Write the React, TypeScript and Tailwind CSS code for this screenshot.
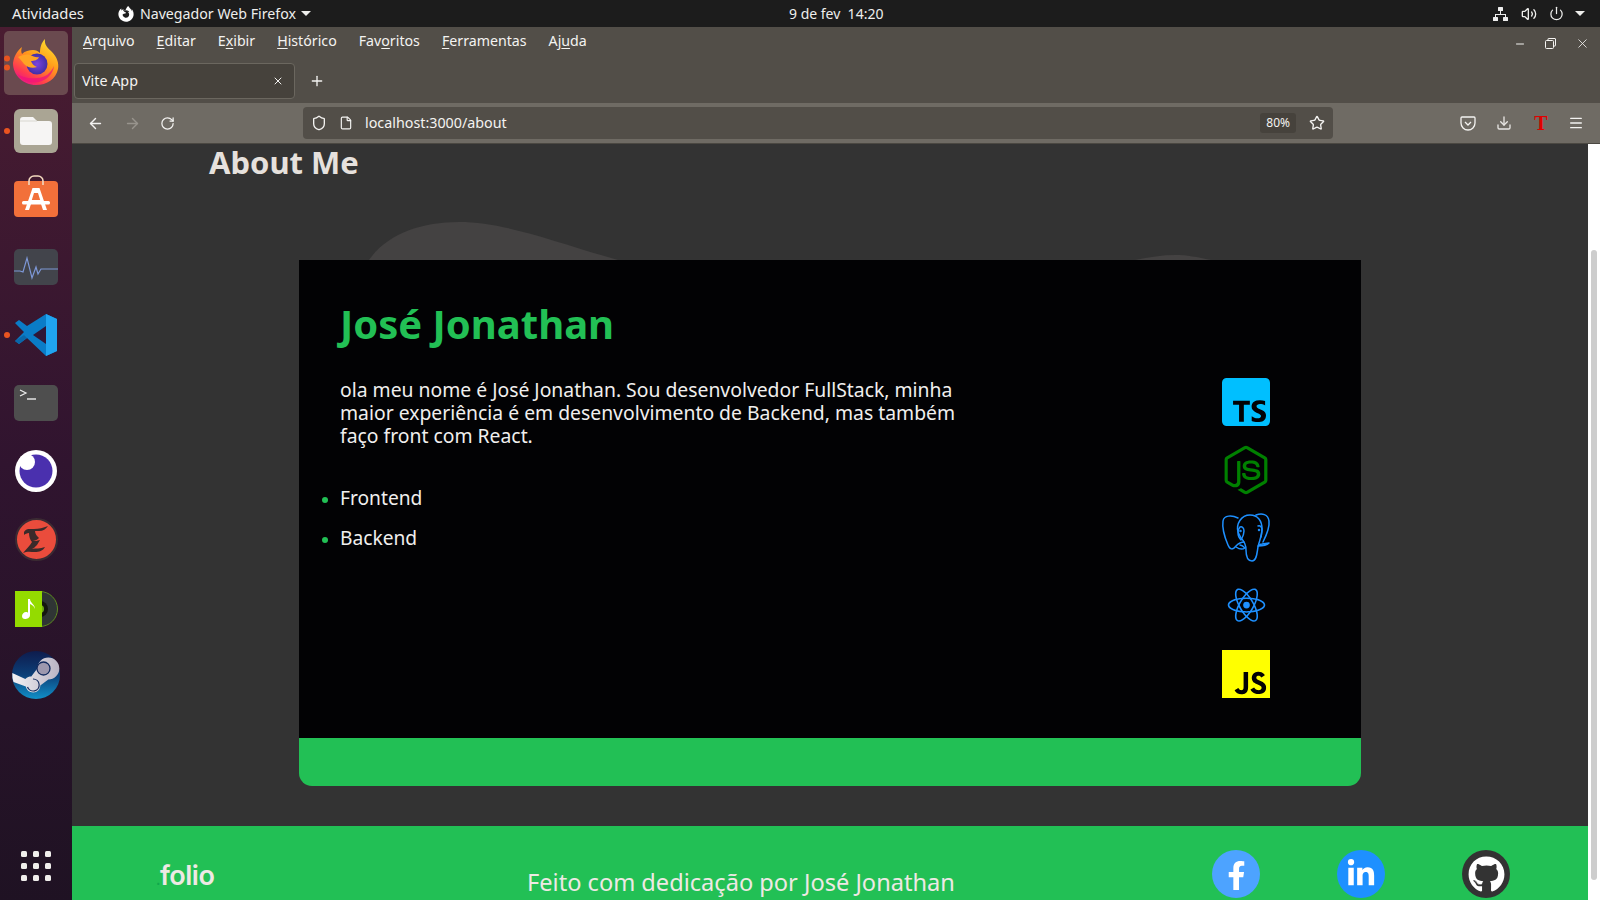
import React from "react";
import { BiLogoTypescript, BiLogoNodejs, BiLogoReact, BiLogoJavascript } from "react-icons/bi";
import { FaFacebookF, FaLinkedinIn, FaGithub, FaFirefoxBrowser } from "react-icons/fa";
import { ArrowLeft, ArrowRight, RotateCw, Shield, File, Star, Download, Menu, X, Plus, Minus, Volume2, Power } from "lucide-react";

const ui = { fontFamily: '"Noto Sans", "Open Sans", sans-serif' };

function Firefox() {
  return (
    <svg className="-mt-[3px] block" width="48" height="48" viewBox="0 0 48 48">
      <defs>
        <linearGradient id="ff1" x1="0.85" y1="0" x2="0.25" y2="1">
          <stop offset="0" stopColor="#ffe430" />
          <stop offset="0.45" stopColor="#ff9a1a" />
          <stop offset="0.8" stopColor="#ff3a50" />
          <stop offset="1" stopColor="#e5148c" />
        </linearGradient>
        <radialGradient id="ff2" cx="0.5" cy="0.5" r="0.55">
          <stop offset="0" stopColor="#7b44e0" />
          <stop offset="1" stopColor="#3d2ca0" />
        </radialGradient>
      </defs>
      <path d="M33 1c-1 6 3 9 7 13 5 5 7 11 6 17-2 10-11 16-22 16C11 47 1 37 1 25 2 18 5 13 10 9c-1 3-1 5 0 7 3-3 7-4 11-4 3 0 5 1 7 3 0-5 1-10 5-14z" fill="url(#ff1)" />
      <circle cx="25" cy="26" r="10.500" fill="url(#ff2)" />
      <path d="M6 19c4-2 8-3 12-2 3 1 6 3 9 2-1 3-5 4-8 4 1 3 3 5 6 6-5 2-10 0-13-3-2-3-4-5-6-7z" fill="#ffa424" />
      <path d="M5 36c5 7 14 10 22 8 8-2 14-8 15-16-3 7-9 12-17 12-8 1-15-1-20-4z" fill="#f0127c" opacity="0.75" />
    </svg>
  );
}

function Files() {
  return (
    <div className="w-11 h-11 rounded-[6px] bg-[#aaa594] flex items-center justify-center">
      <svg width="32" height="28" viewBox="0 0 32 28">
        <path d="M3 0h10l4 4h12a3 3 0 0 1 3 3v18a3 3 0 0 1-3 3H3a3 3 0 0 1-3-3V3a3 3 0 0 1 3-3z" fill="#f6f5f4" />
        <path d="M0 4.500h17v-1H0z" fill="#d8d6d0" />
      </svg>
    </div>
  );
}

function Store() {
  return (
    <div className="relative w-11 -mt-[1px]">
      <svg className="absolute -top-[6px] left-[14px]" width="16" height="10" viewBox="0 0 16 10">
        <path d="M1 10V6a5 5 0 0 1 5-5h4a5 5 0 0 1 5 5v4" fill="none" stroke="#f3d9bf" strokeWidth="1.600" />
      </svg>
      <div className="w-11 h-[36px] rounded-[4px] bg-[#f2703a] flex items-center justify-center">
        <svg width="30" height="30" viewBox="0 0 30 30">
          <path d="M11.500 4h7l7.500 22h-4l-2-6H10l-2 6H4z M13 9l-2.200 7h8.400l-2.200-7z" fill="#fff" fillRule="evenodd" />
          <rect x="1" y="17" width="28" height="3.500" rx="1.500" fill="#fff" />
        </svg>
      </div>
    </div>
  );
}

function Monitor() {
  return (
    <div className="w-11 h-9 rounded-[5px] bg-[#42444b] overflow-hidden">
      <svg width="44" height="36" viewBox="0 0 44 36">
        <path d="M0 22h6l3 1 4-14 5 20 4-11 2 7 3-5h17" fill="none" stroke="#7d97d6" strokeWidth="1.200" />
      </svg>
    </div>
  );
}

function VSCode() {
  return (
    <svg width="44" height="44" viewBox="0 0 44 44">
      <path d="M32 1l11 5v32l-11 5-19-18-8 6-4-3 9-9-9-9 4-3 8 6z" fill="#0a7cc7" />
      <path d="M32 1l11 5v32l-11 5z" fill="#20a4f0" />
      <path d="M32 13L19 22l13 9z" fill="#2f1638" />
      <path d="M1 28l4 3 8-6-3-3z" fill="#0a66a8" />
    </svg>
  );
}

function Terminal() {
  return (
    <div className="w-11 h-9 rounded-[5px] bg-[#4e4e4e] relative">
      <svg className="absolute top-[4px] left-[5px]" width="18" height="12" viewBox="0 0 18 12">
        <path d="M1 1l6 3-6 3" fill="none" stroke="#eee" strokeWidth="1.200" />
        <path d="M8 10h9" stroke="#eee" strokeWidth="1.400" />
      </svg>
    </div>
  );
}

function Eye() {
  return (
    <svg width="42" height="42" viewBox="0 0 42 42">
      <circle cx="21" cy="21" r="21" fill="#fff" />
      <circle cx="21" cy="21" r="16.500" fill="#4a30ae" />
      <circle cx="12" cy="12" r="8" fill="#fff" />
    </svg>
  );
}

function Typora() {
  return (
    <div className="w-[43px] h-[43px] rounded-full bg-[#ea4c3c] border-2 border-[#3b2b33] flex items-center justify-center">
      <svg width="30" height="32" viewBox="0 0 30 32">
        <path d="M3 9c2-4 6-3 10-3 5 0 9-1 14-3-2 3-5 5-9 5l-4 0c0 3 2 5 4 7-2 2-4 3-7 3 3 0 5 0 8-1l-3 5c-2 2-3 3-5 4 4-1 8 0 13-2-2 4-6 5-10 5-4 0-8-1-12 1 3-4 7-7 9-11-2-2-3-6-3-9-2 0-4 1-5 2z" fill="#3a2a2a" />
      </svg>
    </div>
  );
}

function Music() {
  return (
    <div className="relative w-[44px] h-[36px] mt-[4px]">
      <div className="absolute right-0 top-0 w-[36px] h-[36px] rounded-full bg-[#2f3534] border border-[#5d8a20] flex items-center justify-center">
        <div className="w-4 h-4 rounded-full bg-[#15180f] flex items-center justify-center">
          <div className="w-2 h-2 rounded-full bg-[#6fae10]" />
        </div>
      </div>
      <div className="absolute left-[1px] top-0 w-[27px] h-[36px] bg-[#94db00] flex items-center justify-center">
        <svg width="16" height="22" viewBox="0 0 16 22">
          <path d="M7 1h2c0 4 5 5 5 10-1-3-3-4-5-5v11c0 3-3 4-5 4s-3-1-3-3 2-4 4-4c1 0 2 0 2 1z" fill="#fff" />
        </svg>
      </div>
    </div>
  );
}

function Steam() {
  return (
    <svg width="48" height="48" viewBox="0 0 48 48">
      <defs>
        <linearGradient id="st1" x1="0" y1="0" x2="0" y2="1">
          <stop offset="0" stopColor="#0e1c4d" />
          <stop offset="0.5" stopColor="#0c3f78" />
          <stop offset="1" stopColor="#1190c8" />
        </linearGradient>
        <linearGradient id="st2" x1="0" y1="0" x2="1" y2="0">
          <stop offset="0" stopColor="#f4f2f4" />
          <stop offset="1" stopColor="#b9b4c4" />
        </linearGradient>
      </defs>
      <circle cx="24" cy="24" r="24" fill="url(#st1)" />
      <path d="M0.300 22l13 6c2-2 4-2.500 6-2.500l6-8a11 11 0 1 1 11 11l-8 6c0 4-3 7-7 7s-7-3-7.500-6L1.500 31A24 24 0 0 1 0.300 22z" fill="url(#st2)" />
      <circle cx="31.500" cy="17.500" r="6.500" fill="#9d98ae" stroke="#122a5e" strokeWidth="1.300" />
      <path d="M21 28a6 6 0 1 1-5.500 8" fill="none" stroke="#122a5e" strokeWidth="1.200" />
    </svg>
  );
}

function DockItem({ children, dots = 0, active = false }: { children: React.ReactNode; dots?: number; active?: boolean }) {
  return (
    <div className="relative flex items-center justify-center w-[72px] h-[68px] shrink-0">
      {active && <div className="absolute left-1 top-[2px] w-16 h-16 rounded-[5px] bg-[#6a4a4f]" />}
      <div className="relative">{children}</div>
      {dots > 0 && (
        <div className="absolute left-[4px] top-1/2 -translate-y-1/2 flex flex-col gap-[3px]">
          {Array.from({ length: dots }).map((_, i) => (
            <span key={i} className="block w-[6px] h-[6px] rounded-full bg-[#e95420]" />
          ))}
        </div>
      )}
    </div>
  );
}

function Dock() {
  return (
    <aside className="w-[72px] shrink-0 bg-gradient-to-b from-[#4a1c31] via-[#30142f] to-[#1f1223] flex flex-col items-center pt-[2px] h-full">
      <DockItem dots={2} active><Firefox /></DockItem>
      <DockItem dots={1}><Files /></DockItem>
      <DockItem><Store /></DockItem>
      <DockItem><Monitor /></DockItem>
      <DockItem dots={1}><VSCode /></DockItem>
      <DockItem><Terminal /></DockItem>
      <DockItem><Eye /></DockItem>
      <DockItem><Typora /></DockItem>
      <DockItem><Music /></DockItem>
      <DockItem><Steam /></DockItem>
      <div className="mt-auto mb-[19px] grid grid-cols-3 gap-[6px]">
        {Array.from({ length: 9 }).map((_, i) => (
          <span key={i} className="block w-[6px] h-[6px] rounded-[1.500px] bg-[#f0eeec]" />
        ))}
      </div>
    </aside>
  );
}

function TopBar() {
  return (
    <header className="h-[27px] shrink-0 bg-[#1c1c1c] text-[#eeeeec] text-[14px] flex items-center relative">
      <span className="ml-3 text-[14.800px]">Atividades</span>
      <FaFirefoxBrowser className="ml-[34px] text-[16px] text-white" />
      <span className="ml-[6px] text-[14.200px]">Navegador Web Firefox</span>
      <span className="ml-[5px] w-0 h-0 border-x-[5px] border-x-transparent border-t-[5px] border-t-[#eeeeec]" />
      <span className="absolute left-[789px] top-[3px]">9 de fev&nbsp; 14:20</span>
      <div className="ml-auto flex items-center mr-[15px]">
        <svg width="15" height="14" viewBox="0 0 15 14" fill="#eee">
          <rect x="5" y="0" width="5" height="4" rx="0.500" />
          <rect x="0" y="10" width="5" height="4" rx="0.500" />
          <rect x="10" y="10" width="5" height="4" rx="0.500" />
          <path d="M7 4h1v3h5v3h-1V8H3v2H2V7h5z" />
        </svg>
        <Volume2 size={16} className="ml-[13px]" />
        <Power size={15} className="ml-[12px]" />
        <span className="ml-[11px] w-0 h-0 border-x-[5px] border-x-transparent border-t-[5px] border-t-[#eeeeec]" />
      </div>
    </header>
  );
}

function Chrome() {
  const menus = [
    ["A", "rquivo"],
    ["E", "ditar"],
    ["E", "x", "ibir"],
    ["H", "istórico"],
    ["Fav", "o", "ritos"],
    ["F", "erramentas"],
    ["Aj", "u", "da"],
  ];
  return (
    <div className="shrink-0 text-[#f4f3f1]">
      <div className="bg-[#524e48] h-[76px] flex flex-col">
        <div className="h-[36px] flex items-start pt-[4px] text-[14.200px] leading-[20px]">
          {menus.map((m, i) => (
            <span key={i} className="px-[11px]">
              {m.length === 2 ? (
                <><span className="underline underline-offset-2">{m[0]}</span>{m[1]}</>
              ) : (
                <>{m[0]}<span className="underline underline-offset-2">{m[1]}</span>{m[2]}</>
              )}
            </span>
          ))}
          <div className="ml-auto flex items-center gap-[19px] pr-[10px] mt-[5px]">
            <Minus size={12} />
            <svg width="11" height="11" viewBox="0 0 11 11" fill="none" stroke="#f4f3f1">
              <rect x="0.500" y="2.500" width="8" height="8" rx="1" />
              <path d="M3 2.500V1a.5.5 0 0 1 .5-.5h6.500a.5.5 0 0 1 .5.5v6.500a.5.5 0 0 1-.5.5H8.500" />
            </svg>
            <X size={15} strokeWidth={1.300} />
          </div>
        </div>
        <div className="flex items-center pl-[2px] h-[36px]">
          <div className="w-[221px] h-[36px] rounded-[4px] border border-[#6b675f] bg-[#46423c] flex items-center pl-[7px] pr-[10px] text-[14.300px]">
            <span>Vite App</span>
            <X size={12} className="ml-auto" />
          </div>
          <Plus size={16} className="ml-[14px]" />
        </div>
      </div>
      <div className="h-[41px] bg-[#6f6b64] border-b border-[#4b4842] flex items-center">
        <div className="w-[231px] shrink-0 flex items-center">
          <ArrowLeft size={17} className="ml-[15px]" />
          <ArrowRight size={17} className="ml-[20px] text-[#98948d]" />
          <RotateCw size={15} className="ml-[19px]" />
        </div>
        <div className="w-[1030px] shrink-0 h-[32px] rounded-[4px] bg-[#524e48] flex items-center pl-[8px] pr-[8px] text-[14.300px]">
          <Shield size={16} />
          <File size={14} className="ml-[12px]" />
          <span className="ml-[12px]">localhost:3000/about</span>
          <span className="ml-auto text-[12px] bg-[#46423c] rounded-[3px] px-[6px] h-[20px] flex items-center">80%</span>
          <Star size={16} className="ml-[13px]" />
        </div>
        <div className="ml-auto flex items-center gap-[19px] pr-[16px]">
          <svg className="mr-[1px]" width="16" height="16" viewBox="0 0 16 16" fill="none" stroke="#f4f3f1" strokeWidth="1.300">
            <path d="M2 2h12a1 1 0 0 1 1 1v5a7 7 0 0 1-14 0V3a1 1 0 0 1 1-1z" />
            <path d="M5 7l3 3 3-3" />
          </svg>
          <Download size={16} className="text-[#e8e6e3] mr-[2px]" />
          <span className="w-4 text-center text-[20px] font-bold text-[#e00000] leading-none" style={{ fontFamily: '"Liberation Serif", serif' }}>T</span>
          <Menu size={16} />
        </div>
      </div>
    </div>
  );
}

function Blobs() {
  return (
    <svg className="absolute left-[227px] top-[78px]" width="1062" height="38" viewBox="0 0 1062 38">
      <path d="M70 38C88 12 122 0 160 0c46 0 96 20 159 38z" fill="#444242" />
      <path d="M836 38c14-3 28-5 40-5s22 2 36 5z" fill="#444242" />
    </svg>
  );
}

function Postgres() {
  return (
    <svg className="shrink-0" width="60" height="64" viewBox="0 0 60 64" fill="none" stroke="#1e90ff" strokeWidth="1.500" strokeLinecap="round" strokeLinejoin="round">
      <path d="M22 12C16 9 8 9 7 15c-1 7 2 17 5 24 2 5 5 5 8 1 2-2 5-4 8-4" />
      <path d="M22 26c-2-8 3-17 12-17 8 0 12 6 12 14 0 8-3 12-4 18-1 5-1 14-6 14-5 0-6-6-6-11 0-5-1-8-5-12-1-2-2-4-3-6z" />
      <path d="M40 9c6-2 12-1 13 6 1 7-3 15-6 21" />
      <path d="M24 21c2-1 4 1 4 4 0 4-2 7-3 9-2-2-3-4-3-7 0-3 1-5 2-6z" />
      <path d="M42 20c2-1 4 1 4 4 0 3-1 5-1 7" />
      <path d="M20 41c3 2 6 3 9 1-2-2-3-3-5-3M42 40c4 0 8 0 11-3l-7 1c-2 0-3 1-4 2z" />
      <circle cx="24.500" cy="25" r="0.500" />
      <circle cx="43" cy="24" r="0.500" />
    </svg>
  );
}

function Card() {
  const icons = [
    <BiLogoTypescript key="ts" className="text-[#00bfff] shrink-0" size={64} />,
    <BiLogoNodejs key="node" className="text-[#008000] shrink-0" size={58} />,
    <Postgres key="pg" />,
    <BiLogoReact key="re" className="text-[#1e90ff] shrink-0" size={45} />,
    <BiLogoJavascript key="js" className="text-[#ffff00] shrink-0" size={64} />,
  ];
  return (
    <div className="relative ml-[227px] mt-[78px] w-[1062px] rounded-b-[13px] overflow-hidden z-10">
      <div className="bg-[#020204] h-[478px] flex pl-[41px] pt-[34px]">
        <div className="w-[640px]">
          <h2 className="text-[40px] leading-[60px] font-bold text-[#22c055]">José Jonathan</h2>
          <p className="mt-[24px] w-[625px] text-[19.350px] leading-[23px] text-[#f0efee]">
            ola meu nome é José Jonathan. Sou desenvolvedor FullStack, minha maior experiência é em desenvolvimento de Backend, mas também faço front com React.
          </p>
          <ul className="mt-[37px] list-disc marker:text-[#22c055] marker:text-[16px] text-[19.200px] text-[#f0efee] pl-0">
            <li className="h-[40px] leading-[27px]">Frontend</li>
            <li className="h-[40px] leading-[27px]">Backend</li>
          </ul>
        </div>
        <div className="ml-auto mr-[91px] mt-[84px] flex flex-col gap-[20px] items-center w-[48px]">
          {icons.map((ic, i) => (
            <div key={i} className="h-[48px] w-[48px] flex items-center justify-center">{ic}</div>
          ))}
        </div>
      </div>
      <div className="bg-[#22c055] h-[48px]" />
    </div>
  );
}

function Footer() {
  return (
    <footer className="mt-[40px] h-[74px] bg-[#22c055] flex items-start relative text-[#eee9e4]">
      <span className="absolute left-[84px] top-[36px] text-[27px] font-semibold leading-none tracking-[-0.500px]" style={{ fontFamily: '"Inter", sans-serif' }}>
        <span className="text-[#10a84c] text-[14px]">.</span>folio
      </span>
      <span className="absolute left-[455px] top-[39px] text-[23.600px] leading-[35px]">Feito com dedicação por José Jonathan</span>
      <div className="ml-auto mr-[78px] mt-[24px] flex gap-[77px]">
        <div className="w-12 h-12 rounded-full bg-[#4da3ff] flex items-center justify-center text-white"><FaFacebookF size={29} className="mt-[3px]" /></div>
        <div className="w-12 h-12 rounded-full bg-[#1e90ff] flex items-center justify-center text-white"><FaLinkedinIn size={30} /></div>
        <div className="w-12 h-12 rounded-full bg-[#333333] flex items-center justify-center text-white"><FaGithub size={37} /></div>
      </div>
    </footer>
  );
}

export default function App() {
  return (
    <div className="w-[1600px] h-[900px] overflow-hidden flex flex-col bg-[#333333]" style={ui}>
      <TopBar />
      <div className="flex flex-1 min-h-0 relative">
        <Dock />
        <div className="flex-1 min-w-0 flex flex-col">
          <Chrome />
          <div className="flex flex-1 min-h-0">
            <main className="flex-1 min-w-0 bg-[#333333] relative">
              <Blobs />
              <h1 className="pl-[137px] text-[31px] leading-[36px] font-bold text-[#e6e1dd]">About Me</h1>
              <div className="h-[2px]" />
              <Card />
              <Footer />
            </main>
            <div className="w-3 bg-white pt-[106px] flex justify-center shrink-0">
              <div className="w-[6px] h-[630px] bg-[#cdcdcd] rounded-full" />
            </div>
          </div>
        </div>
      </div>
    </div>
  );
}
